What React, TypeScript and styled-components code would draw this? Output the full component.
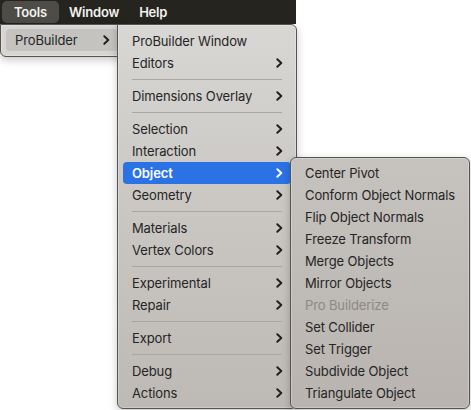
import styled, { createGlobalStyle } from "styled-components";

const GlobalStyle = createGlobalStyle`
  body {
    margin: 0;
    background: #ffffff;
    font-family: "Inter", "Noto Sans", sans-serif;
  }
`

type Entry =
  | { kind: 'item'; label: string; sub?: boolean; active?: boolean; disabled?: boolean }
  | { kind: 'sep' }

const mainMenu: Entry[] = [
  { kind: 'item', label: 'ProBuilder Window' },
  { kind: 'item', label: 'Editors', sub: true },
  { kind: 'sep' },
  { kind: 'item', label: 'Dimensions Overlay', sub: true },
  { kind: 'sep' },
  { kind: 'item', label: 'Selection', sub: true },
  { kind: 'item', label: 'Interaction', sub: true },
  { kind: 'item', label: 'Object', sub: true, active: true },
  { kind: 'item', label: 'Geometry', sub: true },
  { kind: 'sep' },
  { kind: 'item', label: 'Materials', sub: true },
  { kind: 'item', label: 'Vertex Colors', sub: true },
  { kind: 'sep' },
  { kind: 'item', label: 'Experimental', sub: true },
  { kind: 'item', label: 'Repair', sub: true },
  { kind: 'sep' },
  { kind: 'item', label: 'Export', sub: true },
  { kind: 'sep' },
  { kind: 'item', label: 'Debug', sub: true },
  { kind: 'item', label: 'Actions', sub: true },
]

const objectMenu: Entry[] = [
  { kind: 'item', label: 'Center Pivot' },
  { kind: 'item', label: 'Conform Object Normals' },
  { kind: 'item', label: 'Flip Object Normals' },
  { kind: 'item', label: 'Freeze Transform' },
  { kind: 'item', label: 'Merge Objects' },
  { kind: 'item', label: 'Mirror Objects' },
  { kind: 'item', label: 'Pro Builderize', disabled: true },
  { kind: 'item', label: 'Set Collider' },
  { kind: 'item', label: 'Set Trigger' },
  { kind: 'item', label: 'Subdivide Object' },
  { kind: 'item', label: 'Triangulate Object' },
]

const Chevron = (props: { color: string }) => (
  <svg width="7" height="10" viewBox="0 0 7 10">
    <path d="M1.3 1.2 L5.3 5 L1.3 8.8" fill="none" stroke={props.color} strokeWidth="1.9"
          strokeLinecap="round" strokeLinejoin="round" />
  </svg>
)

const renderEntries = (entries: Entry[]) =>
  entries.map((e, i) =>
    e.kind === 'sep' ? (
      <Separator key={i} />
    ) : (
      <Item key={i} $active={e.active} $disabled={e.disabled}>
        <span>{e.label}</span>
        {e.sub && <Chevron color={e.active ? '#ffffff' : '#1e1e1e'} />}
      </Item>
    )
  )

export default function App() {
  return (
    <>
      <GlobalStyle />
      <Screen>
        <MenuBar>
          <BarItem $open>Tools</BarItem>
          <BarItem>Window</BarItem>
          <BarItem>Help</BarItem>
        </MenuBar>

        <ToolsMenu>
          <Item $hover>
            <span>ProBuilder</span>
            <Chevron color="#1e1e1e" />
          </Item>
        </ToolsMenu>

        <ProBuilderMenu>{renderEntries(mainMenu)}</ProBuilderMenu>

        <ObjectMenu>{renderEntries(objectMenu)}</ObjectMenu>
      </Screen>
    </>
  );
}

const Screen = styled.div`
  position: relative;
  width: 471px;
  height: 410px;
  overflow: hidden;
`

const MenuBar = styled.div`
  display: flex;
  align-items: center;
  width: 296px;
  height: 24px;
  padding-left: 2px;
  box-sizing: border-box;
  background: #25241f;
`

const BarItem = styled.div<{ $open?: boolean }>`
  height: 22px;
  display: flex;
  align-items: center;
  padding: 0 ${p => p.$open ? '12px' : '10px'};
  border-radius: 5px;
  font-size: 13px;
  font-weight: 600;
  letter-spacing: -0.2px;
  color: #f2f2f0;
  background: ${p => p.$open ? '#4d4c46' : 'transparent'};
`

const Panel = styled.div`
  position: absolute;
  display: flex;
  flex-direction: column;
  padding: 4px 5px;
  box-sizing: border-box;
  border: 1px solid #555452;
  border-radius: 6px;
  box-shadow: 0 3px 8px rgba(0, 0, 0, 0.22), inset 0 0 0 1px rgba(255, 255, 255, 0.25);
`

const ToolsMenu = styled(Panel)`
  left: 0;
  top: 24px;
  width: 124px;
  height: 33px;
  border-top-left-radius: 0;
  border-top-right-radius: 0;
  padding-top: 4px;
  background: #d6d5d3;
`

const ProBuilderMenu = styled(Panel)`
  left: 117px;
  top: 24px;
  width: 180px;
  height: 385px;
  padding-top: 5px;
  border-top-left-radius: 0;
  background: linear-gradient(180deg, #d8d7d4 0%, #cbc8c4 45%, #bdb9b4 100%);
`

const ObjectMenu = styled(Panel)`
  left: 290px;
  top: 157px;
  width: 180px;
  height: 252px;
  background: linear-gradient(180deg, #c6c2bd 0%, #bfbbb6 50%, #b9b4af 100%);
`

const Item = styled.div<{ $active?: boolean; $disabled?: boolean; $hover?: boolean }>`
  display: flex;
  align-items: center;
  justify-content: space-between;
  height: 22px;
  flex-shrink: 0;
  padding: 0 8px 0 9px;
  border-radius: 4px;
  font-size: 13px;
  font-weight: ${p => p.$active ? 600 : 400};
  letter-spacing: -0.12px;
  color: ${p => p.$active ? '#ffffff' : p.$disabled ? '#8c8984' : '#252525'};
  background: ${p => p.$active ? '#2b73e5' : p.$hover ? '#c4c3c0' : 'transparent'};
  white-space: nowrap;
`

const Separator = styled.div`
  flex-shrink: 0;
  height: 11px;
  margin: 0 9px;
  display: flex;
  align-items: center;

  &::after {
    content: "";
    flex: 1;
    height: 1px;
    background: #aaa7a3;
  }
`
